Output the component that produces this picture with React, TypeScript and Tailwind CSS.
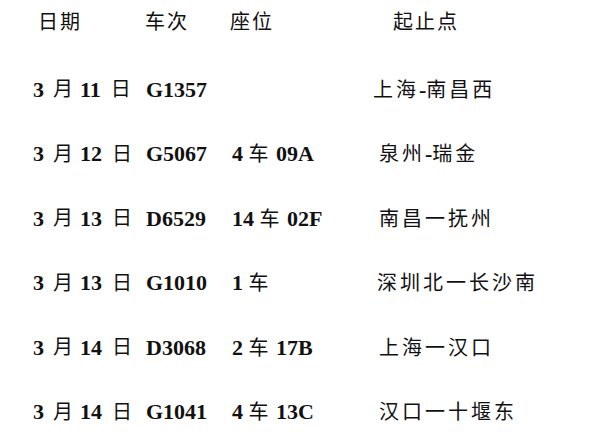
const rows = [
  { day: "11", train: "G1357", seat: "", route: "上海-南昌西", indent: "ml-[1px]" },
  { day: "12", train: "G5067", seat: "4 车 09A", route: "泉州-瑞金", indent: "ml-[7px]" },
  { day: "13", train: "D6529", seat: "14 车 02F", route: "南昌一抚州", indent: "ml-[7px]" },
  { day: "13", train: "G1010", seat: "1 车", route: "深圳北一长沙南", indent: "ml-[5px]" },
  { day: "14", train: "D3068", seat: "2 车 17B", route: "上海一汉口", indent: "ml-[7px]" },
  { day: "14", train: "G1041", seat: "4 车 13C", route: "汉口一十堰东", indent: "ml-[7px]" },
];

// wrap the Chinese characters so they render in a lighter CJK face
function Mixed({ text, wide }: { text: string; wide?: boolean }) {
  const parts = text.match(/[\u4e00-\u9fff]+|[^\u4e00-\u9fff]+/g) || [];
  return (
    <>
      {parts.map((p, i) =>
        /[\u4e00-\u9fff]/.test(p) ? (
          <span
            key={i}
            className={wide ? "font-normal text-[20px] tracking-[3px]" : "font-normal text-[20px] tracking-[2px]"}
          >
            {p}
          </span>
        ) : (
          <span key={i}>{p}</span>
        )
      )}
    </>
  );
}

export default function App() {
  return (
    <div
      className="w-[598px] h-[445px] bg-white text-[#111] text-[22px] font-bold overflow-hidden"
      style={{ fontFamily: '"Liberation Serif", "Noto Sans CJK SC", serif' }}
    >
      <div className="h-[44px] flex items-center font-normal text-[20px] tracking-[2px]">
        <span className="ml-[38px] w-[107px]">日期</span>
        <span className="w-[85px]">车次</span>
        <span className="w-[163px]">座位</span>
        <span>起止点</span>
      </div>
      <div className="mt-[13px] flex flex-col">
        {rows.map((r, i) => (
          <div key={i} className="h-[64.5px] flex items-center whitespace-pre">
            <span className="ml-[33px] w-[113px] flex items-center">
              <span>3</span>
              <span className="ml-[9px] font-normal text-[20px]">月</span>
              <span className="ml-[7px]">{r.day}</span>
              <span className="ml-[10px] font-normal text-[20px]">日</span>
            </span>
            <span className="w-[86px]">{r.train}</span>
            <span className="w-[140px]">
              <Mixed text={r.seat} />
            </span>
            <span className={r.indent}>
              <Mixed text={r.route} wide />
            </span>
          </div>
        ))}
      </div>
    </div>
  );
}
